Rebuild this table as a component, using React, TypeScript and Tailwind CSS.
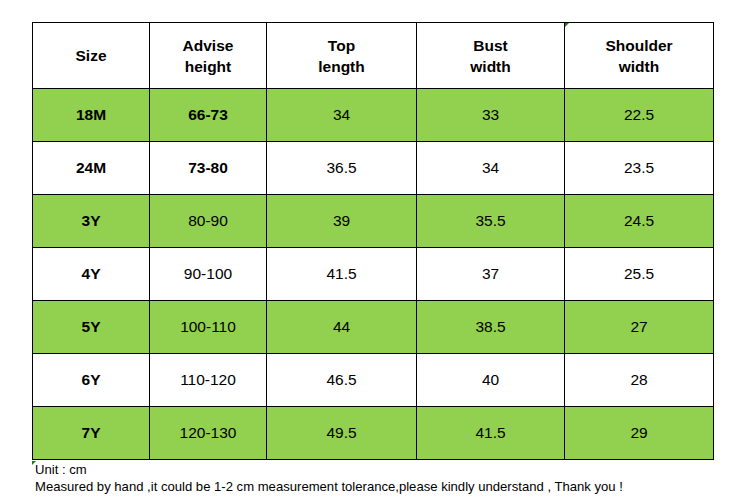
import React from 'react';

const rows = [
  { size: '18M', height: '66-73', top: '34', bust: '33', shoulder: '22.5', green: true, boldHeight: true },
  { size: '24M', height: '73-80', top: '36.5', bust: '34', shoulder: '23.5', green: false, boldHeight: true },
  { size: '3Y', height: '80-90', top: '39', bust: '35.5', shoulder: '24.5', green: true },
  { size: '4Y', height: '90-100', top: '41.5', bust: '37', shoulder: '25.5', green: false },
  { size: '5Y', height: '100-110', top: '44', bust: '38.5', shoulder: '27', green: true },
  { size: '6Y', height: '110-120', top: '46.5', bust: '40', shoulder: '28', green: false },
  { size: '7Y', height: '120-130', top: '49.5', bust: '41.5', shoulder: '29', green: true },
];

const cell = 'flex items-center justify-center text-center border-r border-b border-black';

export default function App() {
  return (
    <div className="w-[750px] h-[501px] bg-white text-black font-['Liberation_Sans',Arial,sans-serif] overflow-hidden">
      <div className="pt-[22px] pl-[32px]">
        <div className="relative grid grid-cols-[117px_117px_150px_148px_149px] border-l border-t border-black w-[682px]">
          {/* header */}
          <div className={`${cell} h-[66px] font-bold text-[15.5px] leading-[21px]`}>Size</div>
          <div className={`${cell} h-[66px] font-bold text-[15.5px] leading-[21px]`}>Advise<br />height</div>
          <div className={`${cell} h-[66px] font-bold text-[15.5px] leading-[21px]`}>Top<br />length</div>
          <div className={`${cell} h-[66px] font-bold text-[15.5px] leading-[21px]`}>Bust<br />width</div>
          <div className={`${cell} relative h-[66px] font-bold text-[15.5px] leading-[21px]`}>
            <span className="absolute left-0 top-0 w-0 h-0 border-t-[4px] border-r-[4px] border-t-[#1f7a1f] border-r-transparent" />
            Shoulder<br />width
          </div>

          {rows.map((r) => {
            const bg = r.green ? 'bg-[#92d050]' : 'bg-white';
            return (
              <React.Fragment key={r.size}>
                <div className={`${cell} ${bg} h-[53px] text-[15.5px] font-bold`}>{r.size}</div>
                <div className={`${cell} ${bg} h-[53px] text-[15.5px] ${r.boldHeight ? 'font-bold' : ''}`}>{r.height}</div>
                <div className={`${cell} ${bg} h-[53px] text-[15.5px]`}>{r.top}</div>
                <div className={`${cell} ${bg} h-[53px] text-[15.5px]`}>{r.bust}</div>
                <div className={`${cell} ${bg} h-[53px] text-[15.5px]`}>{r.shoulder}</div>
              </React.Fragment>
            );
          })}
          <span className="absolute -left-px -bottom-[5px] w-0 h-0 border-t-[4px] border-r-[4px] border-t-[#1f7a1f] border-r-transparent" />
        </div>
        <div className="pl-[3px] pt-[1px] text-[13.1px] leading-[17px]">
          <div>Unit : cm</div>
          <div>Measured by hand ,it could be 1-2 cm measurement tolerance,please kindly understand , Thank you !</div>
        </div>
      </div>
    </div>
  );
}
